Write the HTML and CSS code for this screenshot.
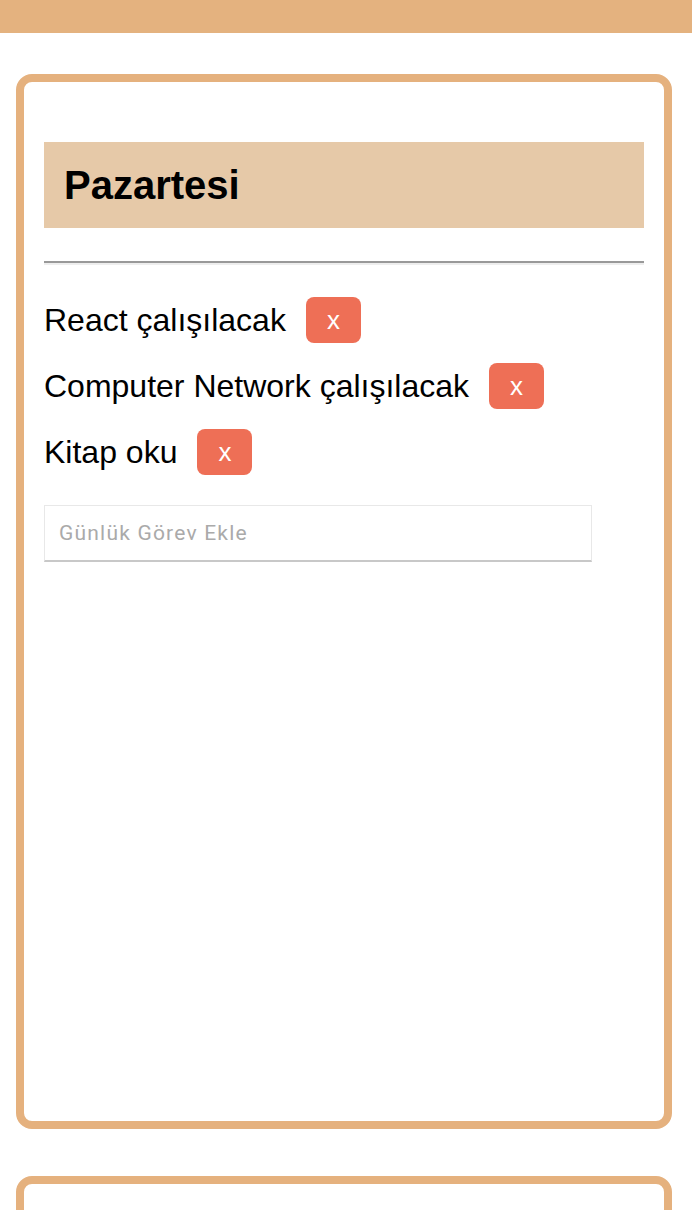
FILE: index.html
```html
<!DOCTYPE html>
<html lang="tr">
<head>
<meta charset="utf-8">
<title>Haftalık Plan</title>
<link rel="stylesheet" href="styles.css">
</head>
<body>
<div class="topbar"></div>
<main class="days">
  <section class="card">
    <h2 class="day-title">Pazartesi</h2>
    <hr class="divider">
    <div class="task"><span class="task-text">React çalışılacak</span><button class="del">x</button></div>
    <div class="task"><span class="task-text">Computer Network çalışılacak</span><button class="del">x</button></div>
    <div class="task"><span class="task-text">Kitap oku</span><button class="del">x</button></div>
    <input class="add-input" type="text" placeholder="Günlük Görev Ekle">
  </section>
  <section class="card"></section>
</main>
</body>
</html>
```

FILE: styles.css
```css
html, body {
  margin: 0;
  padding: 0;
  background: #ffffff;
  font-family: "Liberation Sans", Arial, sans-serif;
  color: #000;
}

.topbar {
  height: 33px;
  background: #e4b27f;
}

.days {
  padding-top: 41px;
}

.card {
  box-sizing: border-box;
  width: 656px;
  height: 1055px;
  margin: 0 0 47px 16px;
  border: 8px solid #e5b17e;
  border-radius: 16px;
  padding: 60px 20px;
  background: #fff;
}

.day-title {
  margin: 0;
  height: 86px;
  line-height: 86px;
  padding-left: 20px;
  background: #e6c9a8;
  font-size: 40px;
  font-weight: bold;
}

.divider {
  margin: 33px 0 32px 0;
  border: 0;
  border-top: 2px solid #999;
  border-bottom: 2px solid #eee;
  height: 0;
}

.task {
  display: flex;
  align-items: center;
  height: 46px;
  margin-bottom: 20px;
  font-size: 32px;
}

.task-text {
  line-height: 1;
}

.del {
  margin-left: 20px;
  height: 46px;
  width: 55px;
  padding: 0;
  border: 0;
  border-radius: 8px;
  background: #ee6f56;
  color: #fff;
  font-family: "Liberation Sans", Arial, sans-serif;
  font-size: 26px;
  line-height: 46px;
  cursor: pointer;
}

.add-input {
  box-sizing: border-box;
  display: block;
  margin-top: 30px;
  width: 548px;
  height: 57px;
  padding: 0 14px;
  border: 1px solid #e8e8e8;
  border-bottom: 2px solid #c8c8c8;
  font-family: Roboto, "Liberation Sans", sans-serif;
  font-size: 21px;
  letter-spacing: 1.2px;
  color: #333;
  outline: none;
}

.add-input::placeholder {
  color: #aaa;
}
```
